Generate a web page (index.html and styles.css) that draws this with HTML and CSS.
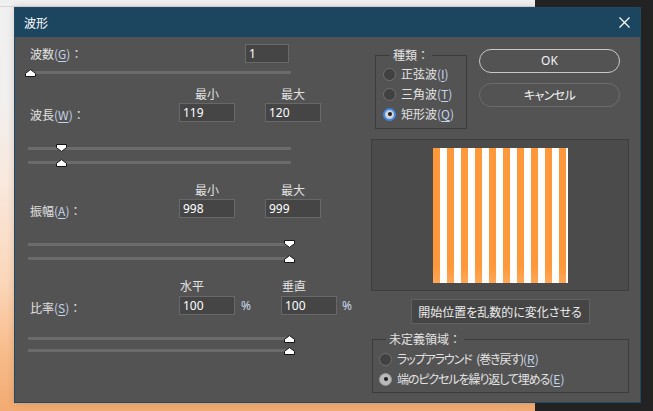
FILE: index.html
```html
<!DOCTYPE html>
<html lang="ja">
<head>
<meta charset="utf-8">
<title>波形</title>
<link rel="stylesheet" href="styles.css">
</head>
<body>
<div class="wallpaper"></div>
<div class="backwin"></div>
<div class="dialog">
  <div class="titlebar">
    <span class="title">波形</span>
    <svg class="close" width="11" height="11" viewBox="0 0 11 11"><path d="M0.5 0.5 L10.5 10.5 M10.5 0.5 L0.5 10.5" stroke="#ffffff" stroke-width="1.2" fill="none"/></svg>
  </div>
  <div class="content">
    <div class="left">
      <div class="gen-row">
        <span class="label">波数<span class="mn">(<u>G</u>)</span>：</span>
        <div class="field gen">1</div>
      </div>
      <div class="slider up s-first">
        <div class="track"></div>
        <svg class="thumb" style="left:-3px" width="11" height="8" viewBox="0 0 11 8"><path d="M0.5 7.5 V4.3 L5.5 0.6 L10.5 4.3 V7.5 Z" fill="#ffffff" stroke="#151515" stroke-width="1"/></svg>
      </div>

      <div class="group g-len">
        <span class="head c2">最小</span><span class="head c4">最大</span>
        <span class="label glabel">波長<span class="mn">(<u>W</u>)</span>：</span>
        <div class="field c2">119</div>
        <div class="field c4">120</div>
      </div>
      <div class="slider down s-a">
        <div class="track"></div>
        <svg class="thumb" style="left:28px" width="11" height="8" viewBox="0 0 11 8"><path d="M0.5 0.5 V3.7 L5.5 7.4 L10.5 3.7 V0.5 Z" fill="#ffffff" stroke="#151515" stroke-width="1"/></svg>
      </div>
      <div class="slider up s-b">
        <div class="track"></div>
        <svg class="thumb" style="left:28px" width="11" height="8" viewBox="0 0 11 8"><path d="M0.5 7.5 V4.3 L5.5 0.6 L10.5 4.3 V7.5 Z" fill="#ffffff" stroke="#151515" stroke-width="1"/></svg>
      </div>

      <div class="group g-amp">
        <span class="head c2">最小</span><span class="head c4">最大</span>
        <span class="label glabel">振幅<span class="mn">(<u>A</u>)</span>：</span>
        <div class="field c2">998</div>
        <div class="field c4">999</div>
      </div>
      <div class="slider down s-a">
        <div class="track"></div>
        <svg class="thumb" style="left:256px" width="11" height="8" viewBox="0 0 11 8"><path d="M0.5 0.5 V3.7 L5.5 7.4 L10.5 3.7 V0.5 Z" fill="#ffffff" stroke="#151515" stroke-width="1"/></svg>
      </div>
      <div class="slider up s-b">
        <div class="track"></div>
        <svg class="thumb" style="left:256px" width="11" height="8" viewBox="0 0 11 8"><path d="M0.5 7.5 V4.3 L5.5 0.6 L10.5 4.3 V7.5 Z" fill="#ffffff" stroke="#151515" stroke-width="1"/></svg>
      </div>

      <div class="group g-ratio">
        <span class="head c2 lefthead">水平</span><span class="head c4 lefthead">垂直</span>
        <span class="label glabel">比率<span class="mn">(<u>S</u>)</span>：</span>
        <div class="field c2">100</div>
        <span class="pct c3">%</span>
        <div class="field c4">100</div>
        <span class="pct c5">%</span>
      </div>
      <div class="slider up s-c">
        <div class="track"></div>
        <svg class="thumb" style="left:256px" width="11" height="8" viewBox="0 0 11 8"><path d="M0.5 7.5 V4.3 L5.5 0.6 L10.5 4.3 V7.5 Z" fill="#ffffff" stroke="#151515" stroke-width="1"/></svg>
      </div>
      <div class="slider up s-d">
        <div class="track"></div>
        <svg class="thumb" style="left:256px" width="11" height="8" viewBox="0 0 11 8"><path d="M0.5 7.5 V4.3 L5.5 0.6 L10.5 4.3 V7.5 Z" fill="#ffffff" stroke="#151515" stroke-width="1"/></svg>
      </div>
    </div>

    <div class="right">
      <div class="top-row">
        <fieldset class="box kind">
          <legend>種類：</legend>
          <div class="radio-row"><span class="radio"></span><span>正弦波<span class="mn">(<u>I</u>)</span></span></div>
          <div class="radio-row"><span class="radio"></span><span>三角波<span class="mn">(<u>T</u>)</span></span></div>
          <div class="radio-row"><span class="radio on focus"></span><span>矩形波<span class="mn">(<u>Q</u>)</span></span></div>
        </fieldset>
        <div class="buttons">
          <div class="btn ok">OK</div>
          <div class="btn cancel">キャンセル</div>
        </div>
      </div>
      <div class="preview">
        <div class="stripes"></div>
      </div>
      <div class="rand-btn">開始位置を乱数的に変化させる</div>
      <fieldset class="box undef">
        <legend>未定義領域：</legend>
        <div class="radio-row"><span class="radio"></span><span class="kana">ラップアラウンド (巻き戻す)<span class="mn">(<u>R</u>)</span></span></div>
        <div class="radio-row"><span class="radio on"></span><span class="kana">端のピクセルを繰り返して埋める<span class="mn">(<u>E</u>)</span></span></div>
      </fieldset>
    </div>
  </div>
</div>
</body>
</html>
```

FILE: styles.css
```css
* { box-sizing: border-box; }
html, body { margin: 0; padding: 0; }
body {
  width: 653px;
  height: 411px;
  position: relative;
  overflow: hidden;
  background: #232323;
  font-family: "Noto Sans CJK JP", "Noto Sans", sans-serif;
  font-size: 12px;
  color: #e2e2e2;
}

/* desktop behind the dialog */
.wallpaper {
  position: absolute;
  left: 0;
  top: 0;
  width: 535px;
  height: 411px;
  background: linear-gradient(180deg, #f0f0f0 0px, #f2f0ef 100px, #f9e9de 180px, #fbd7bb 280px, #f8bd8c 350px, #f2aa72 411px);
}
.backwin {
  position: absolute;
  left: 0;
  top: 0;
  width: 535px;
  height: 7px;
  background: #f0f0f0;
  border-bottom: 1px solid #d6d6d6;
}

/* dialog window */
.dialog {
  position: absolute;
  left: 14px;
  top: 7px;
  width: 627px;
  height: 396px;
  border: 1px solid #1f4a66;
  background: #535353;
  display: flex;
  flex-direction: column;
  box-shadow: 0 0 7px rgba(60, 40, 30, 0.18);
}
.titlebar {
  height: 29px;
  flex: none;
  background: #1c4660;
  display: flex;
  align-items: center;
  justify-content: space-between;
  padding: 0 10px 0 9px;
  color: #ffffff;
}
.title { font-size: 12px; line-height: 16px; }
.close { display: block; }

.content {
  flex: 1;
  display: flex;
  gap: 15px;
  padding: 0 11px 0 13px;
}
.left {
  width: 328px;
  flex: none;
  display: flex;
  flex-direction: column;
}
.right {
  width: 258px;
  flex: none;
  display: flex;
  flex-direction: column;
}

.label { line-height: 16px; padding-left: 2px; white-space: nowrap; }
.mn { color: #c2d4ea; }
.mn u { text-decoration-thickness: 1px; text-underline-offset: 2px; }

.field {
  width: 56px;
  height: 19px;
  background: #454545;
  border: 1px solid #686868;
  color: #ffffff;
  font-family: "Noto Sans", sans-serif;
  font-size: 12px;
  line-height: 17px;
  padding-left: 3px;
}

/* first row */
.gen-row {
  margin-top: 7px;
  display: grid;
  grid-template-columns: 217px 44px;
  height: 19px;
}
.gen-row .label { margin-top: 2px; }
.field.gen { width: 44px; }

/* sliders */
.slider {
  position: relative;
  width: 263px;
  height: 8px;
  flex: none;
}
.track {
  height: 3px;
  background: #6b6b6b;
  margin-top: 2px;
}
.slider.down .track { margin-top: 3px; }
.thumb {
  position: absolute;
  top: 0;
  display: block;
}
.s-first { margin-top: 6px; }
.s-a { margin-top: 22px; }
.s-b { margin-top: 7px; }
.s-c { margin-top: 20px; }
.s-d { margin-top: 4px; }

/* field groups */
.group {
  display: grid;
  grid-template-columns: 151px 56px 30px 56px;
  grid-template-rows: 15px 19px;
  row-gap: 2px;
}
.g-len { margin-top: 9px; }
.g-amp { margin-top: 15px; }
.g-ratio {
  margin-top: 15px;
  row-gap: 3px;
  grid-template-columns: 151px 56px 46px 56px 20px;
}
.head {
  grid-row: 1;
  line-height: 15px;
  text-align: center;
}
.head.lefthead { text-align: left; padding-left: 1px; }
.c2 { grid-column: 2; }
.c3 { grid-column: 3; }
.c4 { grid-column: 4; }
.c5 { grid-column: 5; }
.glabel { grid-column: 1; grid-row: 2; margin-top: 4px; }
.group .field { grid-row: 2; }
.pct {
  grid-row: 2;
  font-family: "Noto Sans", sans-serif;
  font-size: 12px;
  line-height: 19px;
  color: #c8d6ea;
}
.pct.c3 { padding-left: 6px; }
.pct.c5 { padding-left: 5px; }

/* right column */
.top-row {
  display: flex;
  align-items: flex-start;
}
fieldset.box {
  border: 1px solid #3c3c3c;
  min-width: 0;
}
fieldset.box legend {
  padding: 0 3px;
  margin-left: 7px;
  line-height: 16px;
  font-size: 12px;
}
.kind {
  width: 92px;
  margin: 10px 0 0 4px;
  padding: 1px 0 4px 7px;
}
.undef {
  width: 257px;
  margin: 7px 0 0 1px;
  padding: 2px 0 3px 6px;
}
.radio-row {
  height: 20px;
  display: flex;
  align-items: center;
  gap: 5px;
  white-space: nowrap;
  line-height: 16px;
}
.kana { font-feature-settings: "palt"; letter-spacing: -1.1px; word-spacing: 3px; }
.kana .mn { letter-spacing: 0; }
.radio {
  width: 13px;
  height: 13px;
  flex: none;
  border-radius: 50%;
  background: #414141;
  border: 1px solid #707070;
  position: relative;
}
.radio.on {
  background: #b9b9b9;
  border-color: #9a9a9a;
}
.radio.on.focus {
  background: #d2d2d2;
  border: 2px solid #3f86e6;
}
.radio.on::after {
  content: "";
  position: absolute;
  left: 50%;
  top: 50%;
  width: 4px;
  height: 4px;
  margin: -2px 0 0 -2px;
  border-radius: 50%;
  background: #1e1e1e;
}

.buttons {
  margin: 12px 0 0 12px;
  width: 141px;
  display: flex;
  flex-direction: column;
  gap: 10px;
}
.btn {
  height: 24px;
  border-radius: 12px;
  border: 1px solid #c8c8c8;
  color: #f2f2f2;
  display: flex;
  align-items: center;
  justify-content: center;
  line-height: 16px;
}
.btn.ok { font-family: "Noto Sans", sans-serif; font-size: 12px; }
.btn.cancel { border-color: #6c6c6c; font-feature-settings: "palt"; letter-spacing: -0.6px; }

.preview {
  margin-top: 10px;
  height: 152px;
  background: #4b4b4b;
  border: 1px solid #3d3d3d;
  display: flex;
  align-items: center;
  justify-content: center;
}
.stripes {
  width: 135px;
  height: 135px;
  background:
    linear-gradient(180deg, rgba(255, 240, 225, 0) 88%, rgba(255, 238, 220, 0.18) 100%),
    repeating-linear-gradient(90deg, #ff983b 0 7px, #ffffff 7px 14px);
}

.rand-btn {
  margin-top: 8px;
  align-self: center;
  width: 179px;
  height: 25px;
  background: #454545;
  border: 1px solid #616161;
  display: flex;
  align-items: center;
  justify-content: center;
  font-feature-settings: "palt";
  color: #ececec;
}
```
